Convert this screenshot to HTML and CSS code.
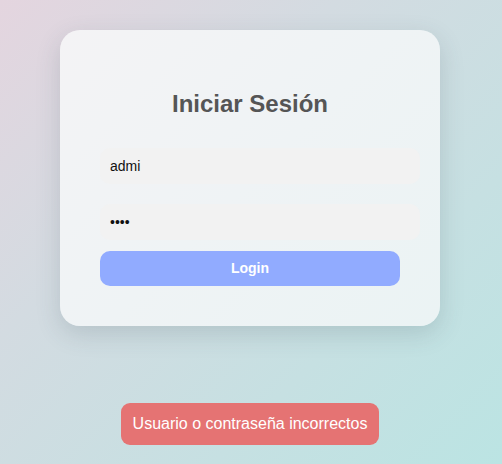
FILE: index.html
```html
<!DOCTYPE html>
<html lang="es">
<head>
<meta charset="utf-8">
<title>Iniciar Sesión</title>
<link rel="stylesheet" href="styles.css">
</head>
<body>
<div class="page">
  <div class="card">
    <h2 class="title">Iniciar Sesión</h2>
    <form class="form">
      <input class="field" type="text" value="admi">
      <input class="field" type="password" value="abcd">
      <button class="btn" type="button">Login</button>
    </form>
  </div>
  <div class="error">Usuario o contraseña incorrectos</div>
</div>
</body>
</html>
```
FILE: styles.css
```css
html, body {
  margin: 0;
  height: 100%;
}
body {
  font-family: "Liberation Sans", Arial, sans-serif;
  background: linear-gradient(135deg, #e4d5df 0%, #d3dbe1 35%, #c6e0e2 70%, #bbe4e3 100%);
}
.page {
  display: flex;
  flex-direction: column;
  align-items: center;
  padding-top: 30px;
  padding-right: 2px;
}
.card {
  width: 300px;
  padding: 40px;
  border-radius: 20px;
  background: linear-gradient(135deg, #f4f3f5 0%, #eff3f5 50%, #ebf3f4 100%);
  box-shadow: 0 8px 24px rgba(60, 80, 90, 0.18);
}
.title {
  margin: 20px 0;
  text-align: center;
  font-size: 24px;
  font-weight: bold;
  color: #555555;
  line-height: 28px;
}
.form {
  display: flex;
  flex-direction: column;
  align-items: flex-start;
}
.field {
  box-sizing: content-box;
  width: 300px;
  margin: 10px 0;
  padding: 10px;
  border: none;
  border-radius: 10px;
  background: #f2f2f2;
  font-family: "Liberation Sans", Arial, sans-serif;
  font-size: 14px;
  line-height: 16px;
  color: #111111;
  outline: none;
}
.btn {
  width: 300px;
  margin-top: 1px;
  padding: 10px;
  border: none;
  border-radius: 10px;
  background: #91abff;
  color: #ffffff;
  font-family: "Liberation Sans", Arial, sans-serif;
  font-size: 14px;
  font-weight: bold;
  line-height: 15px;
}
.error {
  margin-top: 77px;
  padding: 12px;
  border-radius: 9px;
  background: #e57373;
  color: #ffffff;
  font-size: 16px;
  line-height: 18px;
}
```
